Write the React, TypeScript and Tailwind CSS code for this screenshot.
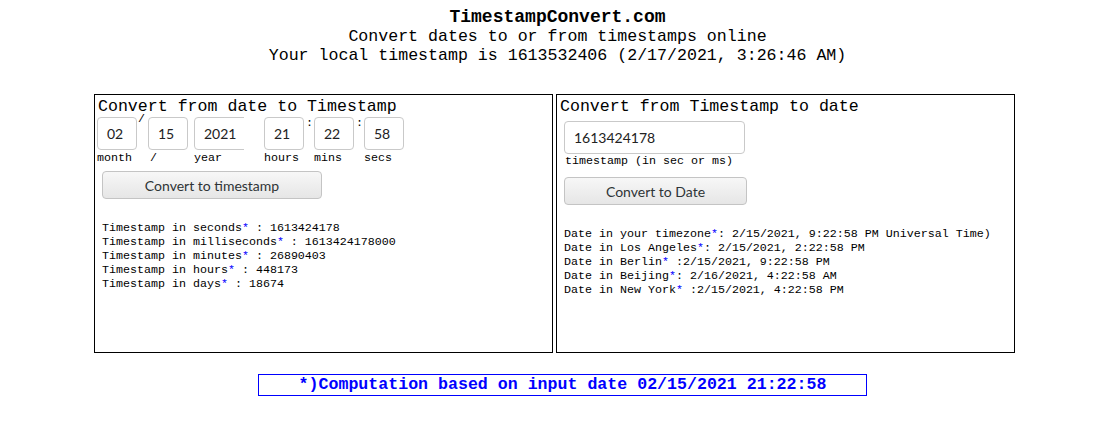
import React from 'react'

const mono = { fontFamily: '"Liberation Mono", "DejaVu Sans Mono", monospace' }
const sans = { fontFamily: 'Lato, "Open Sans", sans-serif' }

function DateInput({ value, width = 'w-[40px]' }: { value: string; width?: string }) {
    return (
        <div
            className={`${width} h-[33px] rounded-[4px] border border-[#c9c9c9] bg-white flex items-center pl-[9px] text-[14px] text-[#222]`}
            style={sans}
        >
            {value}
        </div>
    )
}

function Label({ children }: { children: React.ReactNode }) {
    return <div className="text-[11.66px] leading-[13px] mt-[2px] text-black whitespace-nowrap">{children}</div>
}

function Button({ children, width }: { children: React.ReactNode; width: string }) {
    return (
        <div
            className={`${width} h-[28px] rounded-[4px] border border-[#c4c4c4] bg-gradient-to-b from-[#f7f7f7] to-[#e6e6e6] flex items-center justify-center text-[14px] text-[#2e3436]`}
            style={sans}
        >
            {children}
        </div>
    )
}

function Star() {
    return <span className="text-[#0000ff]">*</span>
}

export default function App() {
    return (
        <div className="bg-white w-[1115px] h-[433px] text-black" style={mono}>
            {/* Header */}
            <div className="pt-[7px] text-center">
                <div className="text-[18px] leading-[20px] font-bold">TimestampConvert.com</div>
                <div className="text-[16.6px] leading-[19px]">Convert dates to or from timestamps online</div>
                <div className="text-[16.6px] leading-[19px]">Your local timestamp is 1613532406 (2/17/2021, 3:26:46 AM)</div>
            </div>

            {/* Panels */}
            <div className="flex gap-[3px] ml-[94px] mt-[29px]">
                {/* Date -> Timestamp */}
                <div className="w-[459px] h-[259px] border border-black p-[2px]">
                    <div className="text-[16.6px] leading-[20px] pl-[1px]">Convert from date to Timestamp</div>
                    <div className="flex items-start">
                        <div className="flex flex-col">
                            <DateInput value="02" />
                            <Label>month</Label>
                        </div>
                        <div className="w-[11px] text-[11.66px] leading-[10px] -mt-[3px] pl-[1px]">/</div>
                        <div className="flex flex-col">
                            <DateInput value="15" />
                            <Label><span className="pl-[2px]">/</span></Label>
                        </div>
                        <div className="flex flex-col ml-[6px]">
                            <div className="w-[50px] overflow-hidden">
                                <DateInput value="2021" width="w-[56px]" />
                            </div>
                            <Label>year</Label>
                        </div>
                        <div className="flex flex-col ml-[20px]">
                            <DateInput value="21" />
                            <Label>hours</Label>
                        </div>
                        <div className="w-[10px] text-[11.66px] leading-[10px] pt-[1px] pl-[2px]">:</div>
                        <div className="flex flex-col">
                            <DateInput value="22" />
                            <Label>mins</Label>
                        </div>
                        <div className="w-[10px] text-[11.66px] leading-[10px] pt-[1px] pl-[2px]">:</div>
                        <div className="flex flex-col">
                            <DateInput value="58" />
                            <Label>secs</Label>
                        </div>
                    </div>
                    <div className="ml-[5px] mt-[6px]">
                        <Button width="w-[220px]">Convert to timestamp</Button>
                    </div>
                    <div className="ml-[5px] mt-[22px] text-[11.66px] leading-[14px]">
                        <div>Timestamp in seconds<Star /> : 1613424178</div>
                        <div>Timestamp in milliseconds<Star /> : 1613424178000</div>
                        <div>Timestamp in minutes<Star /> : 26890403</div>
                        <div>Timestamp in hours<Star /> : 448173</div>
                        <div>Timestamp in days<Star /> : 18674</div>
                    </div>
                </div>

                {/* Timestamp -> Date */}
                <div className="w-[459px] h-[259px] border border-black p-[2px]">
                    <div className="text-[16.6px] leading-[20px] pl-[1px]">Convert from Timestamp to date</div>
                    <div className="ml-[5px] mt-[4px]">
                        <DateInput value="1613424178" width="w-[181px]" />
                        <div className="text-[11.66px] leading-[13px] mt-[1px] pl-[1px]">timestamp (in sec or ms)</div>
                        <div className="mt-[9px]">
                            <Button width="w-[183px]">Convert to Date</Button>
                        </div>
                    </div>
                    <div className="ml-[5px] mt-[22px] text-[11.66px] leading-[14px]">
                        <div>Date in your timezone<Star />: 2/15/2021, 9:22:58 PM Universal Time)</div>
                        <div>Date in Los Angeles<Star />: 2/15/2021, 2:22:58 PM</div>
                        <div>Date in Berlin<Star /> :2/15/2021, 9:22:58 PM</div>
                        <div>Date in Beijing<Star />: 2/16/2021, 4:22:58 AM</div>
                        <div>Date in New York<Star /> :2/15/2021, 4:22:58 PM</div>
                    </div>
                </div>
            </div>

            {/* Footer note */}
            <div className="ml-[258px] mt-[21px] w-[609px] h-[22px] border border-[#0000ff] flex items-center justify-center pt-[1px] text-[16.6px] font-bold text-[#0000ff]">
                *)Computation based on input date 02/15/2021 21:22:58
            </div>
        </div>
    )
}
